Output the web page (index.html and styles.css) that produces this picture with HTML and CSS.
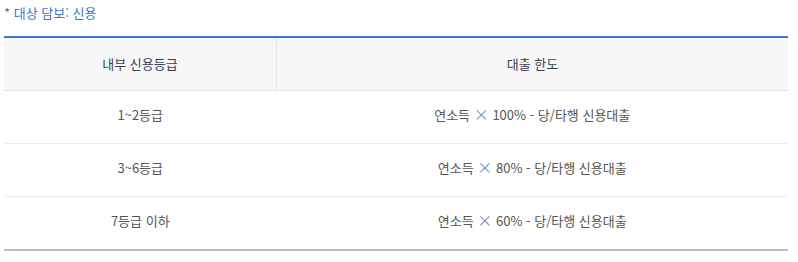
FILE: index.html
```html
<!DOCTYPE html>
<html lang="ko">
<head>
<meta charset="utf-8">
<link rel="stylesheet" href="styles.css">
</head>
<body>
<div class="wrap">
  <p class="caption">* 대상 담보: 신용</p>
  <table class="grid">
    <thead>
      <tr><th class="c1">내부 신용등급</th><th>대출 한도</th></tr>
    </thead>
    <tbody>
      <tr><td>1~2등급</td><td>연소득 <span class="x">×</span> 100% - 당/타행 신용대출</td></tr>
      <tr><td>3~6등급</td><td>연소득 <span class="x">×</span> 80% - 당/타행 신용대출</td></tr>
      <tr><td>7등급 이하</td><td>연소득 <span class="x">×</span> 60% - 당/타행 신용대출</td></tr>
    </tbody>
  </table>
</div>
</body>
</html>
```
FILE: styles.css
```css
html, body { margin: 0; padding: 0; background: #fff; }
body { font-family: "Noto Sans CJK KR", "Noto Sans", sans-serif; }
.wrap { padding: 4px 10px 0 4px; }
.caption { margin: 0; font-size: 13px; line-height: 18px; color: #3b74c9; height: 32px; }
.grid { width: 784px; border-collapse: collapse; table-layout: fixed; border-top: 2px solid #3a78d4; border-bottom: 2px solid #b9b9cf; }
.grid th, .grid td { text-align: center; font-size: 13px; font-weight: 400; line-height: 18px; }
.grid th { background: #f7f7f7; color: #3a3f55; height: 52px; padding: 0; border-bottom: 1px solid #e6e6e6; }
.grid th.c1 { width: 272px; border-right: 1px solid #e3e3e3; }
.grid td { color: #555; height: 48px; padding: 0 0 4px; border-bottom: 1px solid #ebebeb; }
.grid tbody tr:last-child td { border-bottom: none; }
.x { color: #6f8fc8; font-size: 15px; line-height: 1; }
```
